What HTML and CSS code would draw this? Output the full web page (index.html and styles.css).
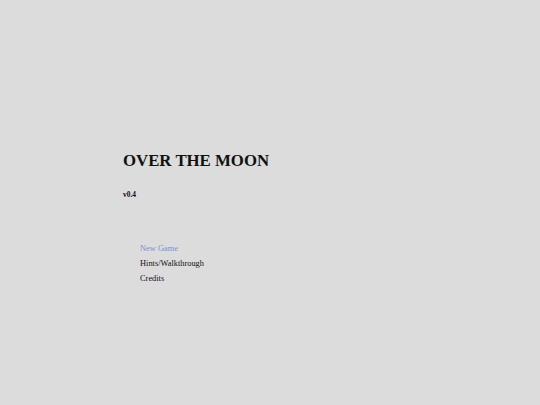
FILE: index.html
```html
<!DOCTYPE html>
<html>
<head>
<meta charset="utf-8">
<link rel="stylesheet" href="styles.css">
</head>
<body>
<div class="screen">
  <div class="content">
    <h1 class="title">OVER THE MOON</h1>
    <div class="version">v0.4</div>
    <ul class="menu">
      <li class="item active">New Game</li>
      <li class="item">Hints/Walkthrough</li>
      <li class="item">Credits</li>
    </ul>
  </div>
</div>
</body>
</html>
```
FILE: styles.css
```css
html, body {
  margin: 0;
  padding: 0;
  background: #dcdcdc;
  font-family: "Liberation Serif", "Times New Roman", serif;
  color: #111;
}
.screen {
  width: 540px;
  height: 405px;
  box-sizing: border-box;
  padding: 150.5px 0 0 123px;
}
.title {
  margin: 0;
  font-size: 16.8px;
  font-weight: bold;
  line-height: 20px;
}
.version {
  margin-top: 19.5px;
  font-size: 7.4px;
  font-weight: bold;
  line-height: 10px;
}
.menu {
  list-style: none;
  margin: 41px 0 0 17px;
  padding: 0;
}
.item {
  font-size: 8.4px;
  line-height: 15px;
}
.active {
  color: #7b8fd0;
}
```
